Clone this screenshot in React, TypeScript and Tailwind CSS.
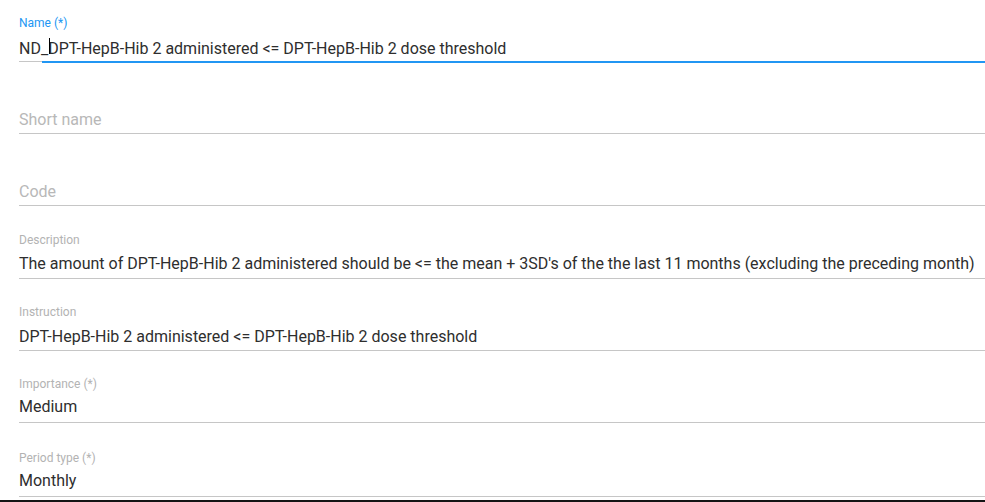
import React from 'react'

type FieldProps = {
  label: string
  value?: string
  focused?: boolean
  className?: string
  labelClass?: string
  valueClass?: string
  children?: React.ReactNode
}

function Field({ label, value, focused = false, className = '', labelClass = 'mb-[6px]', valueClass = '', children }: FieldProps) {
  const empty = !value && !children
  return (
    <div className={`relative flex flex-col justify-end border-b border-[#c6c6c6] ${className}`}>
      {!empty && (
        <div className={`h-4 text-[12px] leading-4 ${labelClass} ${focused ? 'text-[#2196f3]' : 'text-[#b3b3b3]'}`}>
          {label}
        </div>
      )}
      <div className={`h-6 box-content text-[16px] leading-6 whitespace-nowrap ${valueClass} ${empty ? 'text-[#b8b8b8]' : 'text-[#2e2e2e]'}`}>
        {empty ? label : children ?? value}
      </div>
      {focused && (
        <div className="absolute left-[23px] right-0 bottom-[-2px] h-[2px] bg-[#2196f3]" />
      )}
    </div>
  )
}

export default function App() {
  return (
    <div className="w-[985px] h-[502px] bg-white overflow-hidden flex flex-col" style={{ fontFamily: 'Roboto, "Liberation Sans", sans-serif' }}>
      <div className="pl-[19px] flex flex-col">
        <Field label="Name (*)" focused className="h-[62px]">
          ND_
          <span className="relative inline-block w-0">
            <span className="absolute left-[1px] top-[-16px] w-px h-[16px] bg-black" />
          </span>
          DPT-HepB-Hib 2 administered &lt;= DPT-HepB-Hib 2 dose threshold
        </Field>
        <Field label="Short name" className="h-[72px]" valueClass="pb-[1px]" />
        <Field label="Code" className="h-[72px]" valueClass="pb-[1px]" />
        <Field
          label="Description"
          className="h-[73px]"
          labelClass="mb-[4px]"
          valueClass="pb-[2px]"
          value="The amount of DPT-HepB-Hib 2 administered should be <= the mean + 3SD's of the the last 11 months (excluding the preceding month)"
        />
        <Field
          label="Instruction"
          className="h-[72px]"
          labelClass="mb-[5px]"
          valueClass="pb-[1px]"
          value="DPT-HepB-Hib 2 administered <= DPT-HepB-Hib 2 dose threshold"
        />
        <Field label="Importance (*)" className="h-[72px]" labelClass="mb-[3px]" valueClass="pb-[3px]" value="Medium" />
        <Field label="Period type (*)" className="h-[74px]" labelClass="mb-[3px]" valueClass="pb-[3px]" value="Monthly" />
      </div>
      <div className="mt-auto h-[2px] bg-[#141414]" />
    </div>
  )
}
